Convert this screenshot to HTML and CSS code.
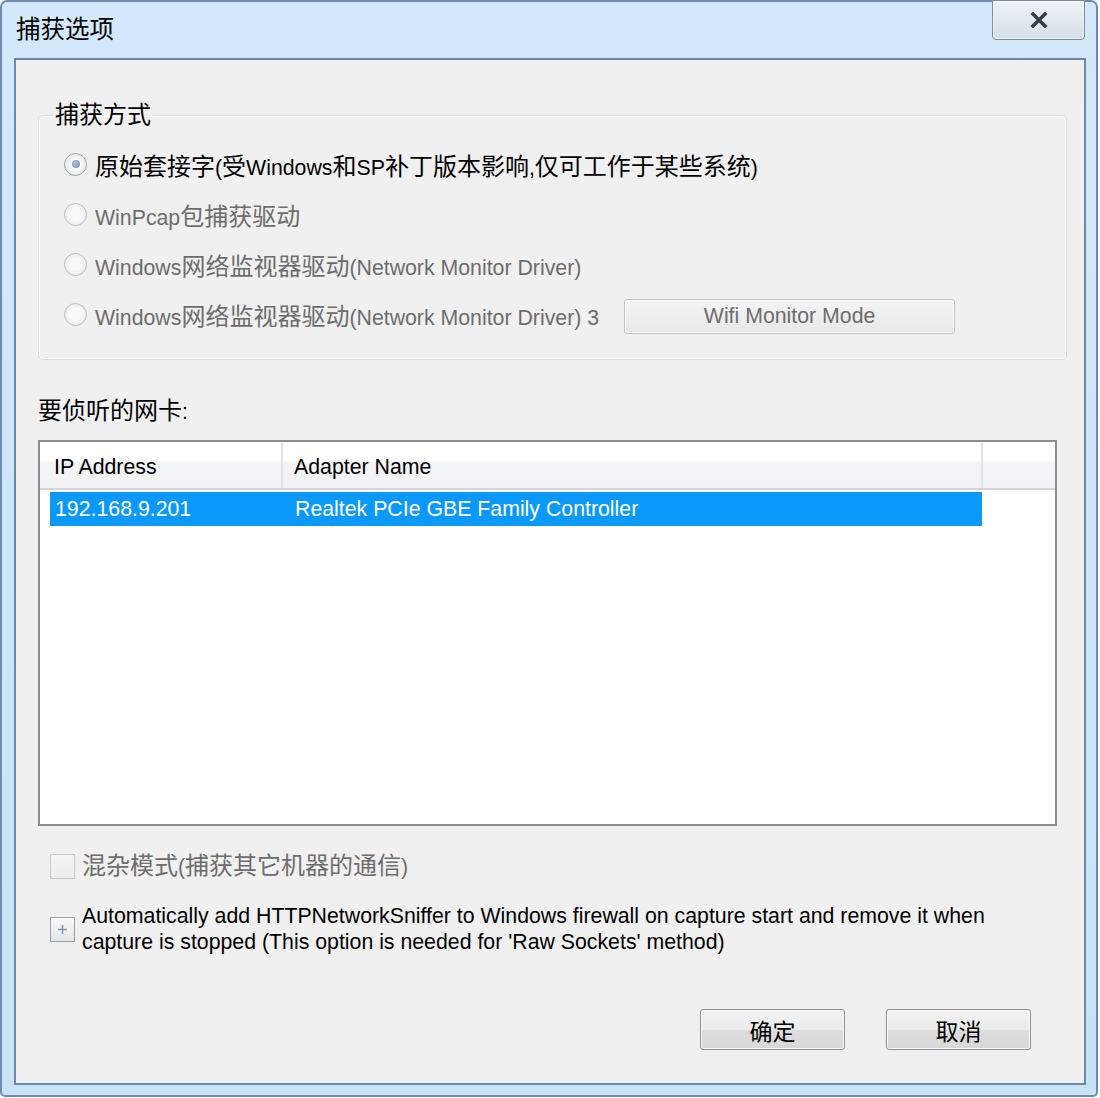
FILE: index.html
```html
<!DOCTYPE html>
<html lang="zh-CN">
  <head>
    <meta charset="UTF-8" />
    <title>捕获选项</title>
    <link rel="stylesheet" href="styles.css">
  </head>
  <body>
    <div class="window">
      <div class="titlebar">
        <div class="title">捕获选项</div>
        <div class="close-btn">
          <svg width="18" height="16" viewBox="0 0 18 16">
            <path d="M3 2 L15 14 M15 2 L3 14" stroke="#3b3f44" stroke-width="3.6" stroke-linecap="square" />
          </svg>
        </div>
      </div>

      <div class="client">
        <fieldset class="group">
          <legend>捕获方式</legend>
          <div class="radio-row">
            <span class="radio checked"></span>
            <span class="label"><span class="zh">原始套接字</span>(<span class="zh">受</span>Windows<span class="zh">和</span>SP<span class="zh">补丁版本影响</span>,<span class="zh">仅可工作于某些系统</span>)</span>
          </div>
          <div class="radio-row disabled">
            <span class="radio"></span>
            <span class="label">WinPcap<span class="zh">包捕获驱动</span></span>
          </div>
          <div class="radio-row disabled">
            <span class="radio"></span>
            <span class="label">Windows<span class="zh">网络监视器驱动</span>(Network Monitor Driver)</span>
          </div>
          <div class="radio-row disabled">
            <span class="radio"></span>
            <span class="label">Windows<span class="zh">网络监视器驱动</span>(Network Monitor Driver) 3</span>
            <div class="btn wifi-btn">Wifi Monitor Mode</div>
          </div>
        </fieldset>

        <div class="section-label"><span class="zh">要侦听的网卡</span>:</div>

        <div class="listview">
          <div class="lv-header">
            <div class="col col-ip">IP Address</div>
            <div class="col col-name">Adapter Name</div>
            <div class="col col-fill"></div>
          </div>
          <div class="lv-row selected">
            <div class="col col-ip">192.168.9.201</div>
            <div class="col col-name">Realtek PCIe GBE Family Controller</div>
          </div>
        </div>

        <div class="check-row disabled">
          <span class="checkbox"></span>
          <span class="label"><span class="zh">混杂模式</span>(<span class="zh">捕获其它机器的通信</span>)</span>
        </div>
        <div class="check-row multi">
          <span class="checkbox plus">
            <svg width="11" height="11" viewBox="0 0 11 11">
              <path d="M5.5 1 V10 M1 5.5 H10" stroke="#7d98b6" stroke-width="1.6" />
            </svg>
          </span>
          <span class="label">Automatically add HTTPNetworkSniffer to Windows firewall on capture start and remove it when<br>capture is stopped (This option is needed for 'Raw Sockets' method)</span>
        </div>

        <div class="buttons">
          <div class="btn dlg-btn">确定</div>
          <div class="btn dlg-btn">取消</div>
        </div>
      </div>
    </div>
  </body>
</html>
```

FILE: styles.css
```css
body {
  margin: 0;
  background-color: #fff;
  font-family: "Liberation Sans", "Noto Sans CJK SC", sans-serif;
  font-size: 21.3px;
  color: #000;
}
.zh {
  font-size: 24px;
}
.window {
  width: 1098px;
  height: 1097px;
  box-sizing: border-box;
  border: 2px solid #6c8db3;
  border-radius: 7px 7px 5px 5px;
  background: linear-gradient(#d3e9fb, #c9e2f7);
  display: flex;
  flex-direction: column;
}
.titlebar {
  height: 56px;
  display: flex;
  justify-content: space-between;
  align-items: flex-start;
}
.title {
  font-family: "Noto Sans CJK SC", sans-serif;
  font-size: 24.5px;
  line-height: 30px;
  padding: 11px 0 0 14px;
}
.close-btn {
  width: 93px;
  height: 40px;
  margin: -2px 11px 0 0;
  box-sizing: border-box;
  border: 1px solid #7d8c9c;
  border-radius: 0 0 4px 4px;
  background: linear-gradient(#eef3f7, #d6dee6);
  box-shadow: inset 0 0 0 1px rgba(255, 255, 255, 0.6);
  display: flex;
  justify-content: center;
  align-items: center;
}
.client {
  flex: 1;
  margin: 0 10px 10px 12px;
  border: 2px solid #6b88a7;
  background-color: #f0f0f0;
  display: flex;
  flex-direction: column;
}

/* group box */
.group {
  margin: 41px 17px 0 22px;
  padding: 10px 0 20px 0;
  border: 1px solid #d5dfe5;
  border-radius: 5px;
  box-shadow: inset 0 0 0 1px #fff;
}
.group legend {
  margin-left: 14px;
  padding: 0 2px;
  font-size: 24px;
  line-height: 28px;
}
.radio-row {
  height: 50px;
  padding-left: 25px;
  display: flex;
  align-items: center;
}
.radio {
  width: 23px;
  height: 23px;
  box-sizing: border-box;
  border: 1px solid #a3a3a3;
  border-radius: 50%;
  background: radial-gradient(circle at 50% 50%, #f6f6f6 40%, #dcdcdc 100%);
  margin-right: 8px;
  display: flex;
  justify-content: center;
  align-items: center;
}
.radio.checked::after {
  content: "";
  width: 8px;
  height: 8px;
  border-radius: 50%;
  background: radial-gradient(circle at 40% 40%, #a9bfd6, #6f8cae);
}
.disabled .radio {
  border-color: #bdbdbd;
  background: radial-gradient(circle at 50% 50%, #f9f9f9 40%, #e2e2e2 100%);
}
.disabled .label {
  color: #6d6d6d;
}
.btn {
  box-sizing: border-box;
  border: 1px solid #a9a9a9;
  border-radius: 3px;
  background: linear-gradient(#f3f3f3 0%, #ebebeb 50%, #dddddd 51%, #d8d8d8 100%);
  box-shadow: inset 0 0 0 1px #fcfcfc;
  display: flex;
  justify-content: center;
  align-items: center;
}
.wifi-btn {
  width: 331px;
  height: 35px;
  margin: 4px 0 0 25px;
  color: #6d6d6d;
  border-color: #c2c2c2;
  background: linear-gradient(#f4f4f4, #e8e8e8);
}

.section-label {
  margin: 37px 0 0 22px;
  line-height: 28px;
}

/* list view */
.listview {
  margin: 14px 27px 0 22px;
  height: 386px;
  box-sizing: border-box;
  border: 2px solid #8b8d90;
  background-color: #fff;
}
.lv-header {
  height: 48px;
  box-sizing: border-box;
  border-bottom: 2px solid #d5d5d5;
  background: linear-gradient(#fff 0%, #fff 42%, #f4f5f7 43%, #f1f2f4 100%);
  display: flex;
}
.lv-header .col {
  box-sizing: border-box;
  border-right: 2px solid #e3e4e6;
  line-height: 48px;
  margin-top: 1px;
}
.lv-header .col-ip {
  width: 243px;
  padding-left: 14px;
}
.lv-header .col-name {
  width: 700px;
  padding-left: 11px;
}
.lv-header .col-fill {
  flex: 1;
  border-right: none;
}
.lv-row {
  margin: 2px 0 0 10px;
  width: 932px;
  height: 34px;
  display: flex;
  align-items: center;
}
.lv-row.selected {
  background-color: #0a99fb;
  color: #fff;
}
.lv-row .col-ip {
  width: 233px;
  padding-left: 5px;
  box-sizing: border-box;
}
.lv-row .col-name {
  padding-left: 12px;
}

/* check boxes */
.check-row {
  margin: 26px 0 0 34px;
  display: flex;
  align-items: center;
  line-height: 28px;
}
.check-row.multi {
  margin-top: 22px;
  line-height: 26px;
}
.checkbox {
  width: 25px;
  height: 25px;
  box-sizing: border-box;
  border: 1px solid #c7c7c7;
  background: linear-gradient(#f6f6f6, #ececec);
  margin-right: 7px;
  flex-shrink: 0;
  display: flex;
  justify-content: center;
  align-items: center;
}
.checkbox.plus {
  border-color: #9a9fa5;
  background: linear-gradient(#f9f9f9, #e4e6e9);
}

.buttons {
  margin: auto 53px 33px 0;
  display: flex;
  justify-content: flex-end;
  gap: 41px;
}
.dlg-btn {
  width: 145px;
  height: 41px;
  font-size: 23px;
  border-color: #8f8f8f;
}
```
